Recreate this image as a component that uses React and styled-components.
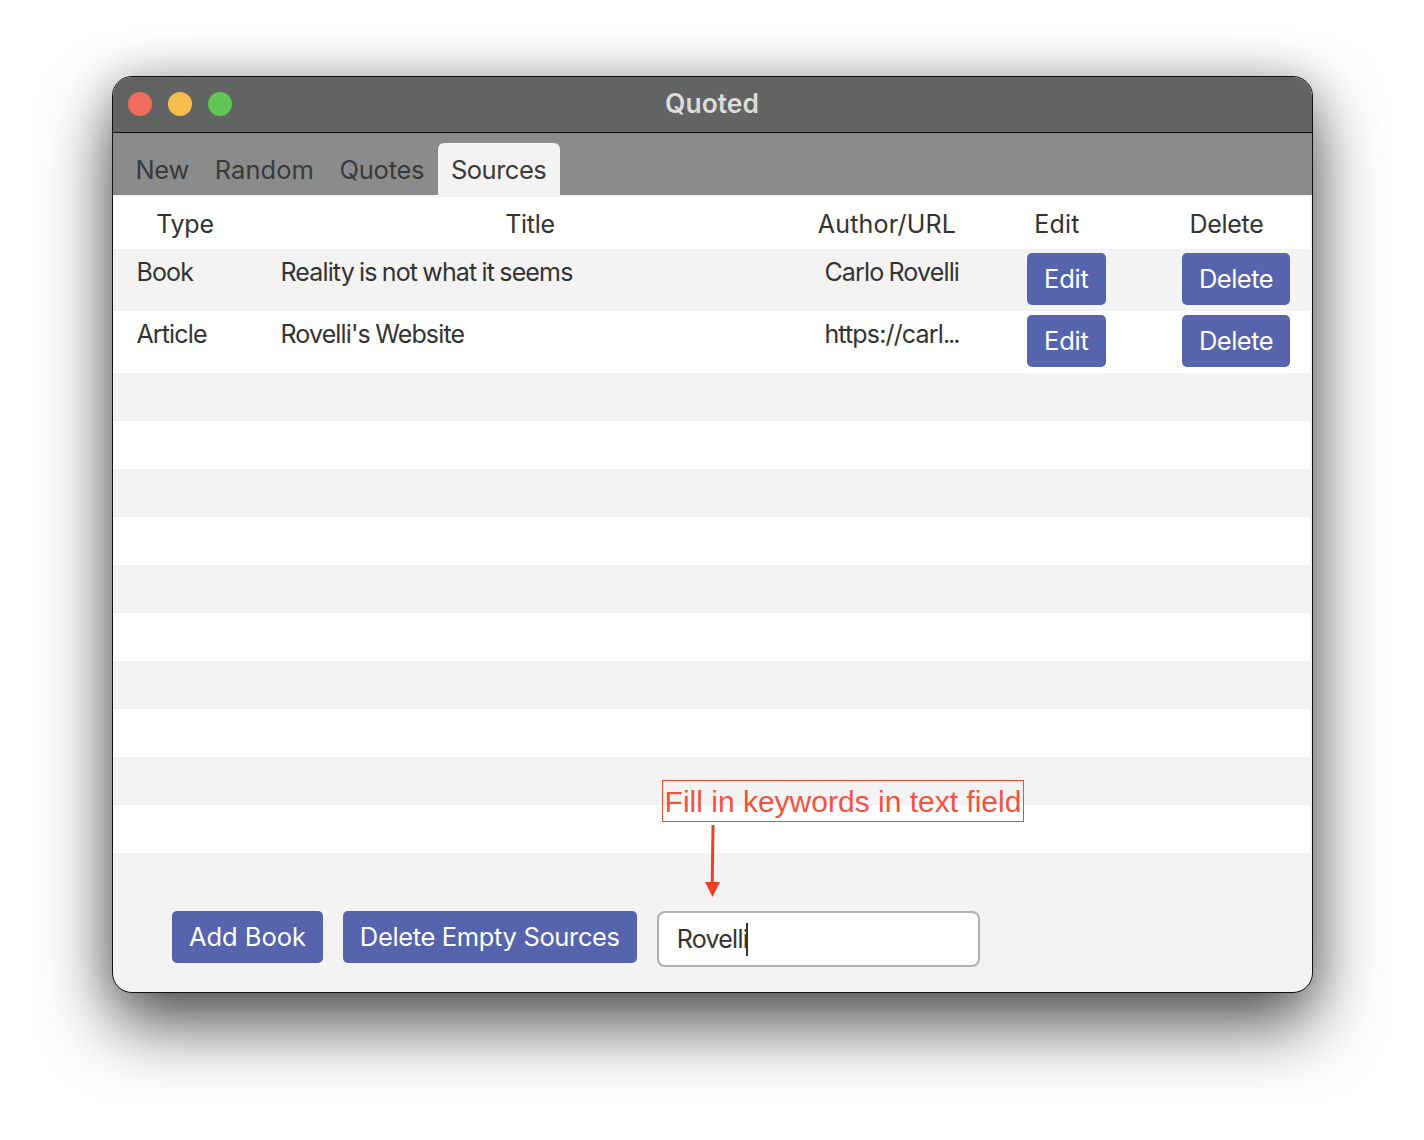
import React from 'react';
import styled, { createGlobalStyle } from 'styled-components';

const GlobalStyle = createGlobalStyle`
  html, body {
    margin: 0;
    background: #fff;
    font-family: Inter, "Liberation Sans", sans-serif;
  }
`;

const Page = styled.div`
  width: 1424px;
  height: 1140px;
  box-sizing: border-box;
  padding: 76px 111px 147px 112px;
  overflow: hidden;
`;

const Window = styled.div`
  position: relative;
  height: 917px;
  box-sizing: border-box;
  display: flex;
  flex-direction: column;
  background: #f3f3f3;
  border: 1px solid #111;
  border-radius: 20px;
  box-shadow: 0 32px 70px rgba(0, 0, 0, 0.66), 0 0 44px rgba(0, 0, 0, 0.2);
`;

const TitleBar = styled.div`
  flex: none;
  height: 56px;
  box-sizing: border-box;
  display: flex;
  align-items: center;
  position: relative;
  padding: 0 0 2px 15px;
  gap: 16px;
  background: #626463;
  border-bottom: 1px solid #111;
  border-radius: 19px 19px 0 0;
`;

const Light = styled.span`
  width: 24px;
  height: 24px;
  border-radius: 50%;
  background: ${({ $color }) => $color};
`;

const WindowTitle = styled.div`
  position: absolute;
  left: 0;
  right: 1px;
  top: 11px;
  text-align: center;
  font-size: 26.4px;
  line-height: 30px;
  font-weight: 600;
  color: #dcdcdc;
`;

const TabBar = styled.div`
  flex: none;
  height: 62px;
  box-sizing: border-box;
  padding: 10px 0 0 9.6px;
  display: flex;
  background: #8b8b8b;
`;

const Tab = styled.div`
  height: 52px;
  box-sizing: border-box;
  padding: 0 12.8px;
  display: flex;
  align-items: center;
  font-size: 25.5px;
  letter-spacing: ${({ $spacing = -0.25 }) => $spacing}px;
  color: #3a3a3a;
`;

const ActiveTab = styled(Tab)`
  width: 122px;
  margin-left: 0.8px;
  padding: 0 13px;
  border-radius: 6px 6px 0 0;
  background: #f3f3f3;
`;

const HeaderRow = styled.div`
  flex: none;
  height: 52px;
  box-sizing: border-box;
  margin: 2px 2px 0 0;
  padding-top: 2px;
  display: grid;
  grid-template-columns: 144px 546px 168px 172px 167px;
  align-items: center;
  background: #fff;
`;

const HeaderCell = styled.div`
  text-align: center;
  font-size: 25px;
  letter-spacing: ${({ $spacing }) => $spacing}px;
  color: #333;
`;

const Row = styled.div`
  flex: none;
  height: ${({ $tall }) => ($tall ? 62 : 48)}px;
  margin-right: 2px;
  display: grid;
  grid-template-columns: 144px 544px 202px 155px 153px;
  background: ${({ $odd }) => ($odd ? '#f3f3f3' : '#fff')};
`;

const Cell = styled.div`
  padding: 8px 0 0 23.4px;
  font-size: 25px;
  line-height: 30px;
  letter-spacing: -0.85px;
  word-spacing: -1px;
  color: #333;
  white-space: nowrap;
`;

const Dots = styled.span`
  letter-spacing: -2px;
`;

const Button = styled.button`
  height: 52px;
  box-sizing: border-box;
  padding: 0 17px 2px;
  border: 0;
  border-radius: 5px;
  background: #5564ac;
  color: #fff;
  font-family: inherit;
  font-size: 25.5px;
  letter-spacing: ${({ $spacing = -0.2 }) => $spacing}px;
  white-space: nowrap;
`;

const RowButton = styled(Button)`
  margin: 4px 0 0 24px;
`;

const Footer = styled.div`
  flex: 1;
  display: flex;
  align-items: flex-start;
  padding: 58px 0 0 59px;
  gap: 20px;
`;

const SearchField = styled.div`
  width: 323px;
  height: 56px;
  box-sizing: border-box;
  padding-left: 18px;
  display: flex;
  align-items: center;
  background: #fff;
  border: 2px solid #b0b0b0;
  border-radius: 8px;
  font-size: 25px;
  letter-spacing: -0.75px;
  color: #333;
`;

const Caret = styled.span`
  width: 2px;
  height: 33px;
  margin-left: -2px;
  background: #333;
`;

const Callout = styled.div`
  position: absolute;
  left: 549px;
  top: 703px;
  width: 362px;
  height: 42px;
  box-sizing: border-box;
  padding-top: 2px;
  border: 1px solid #ee4b33;
  display: flex;
  align-items: center;
  justify-content: center;
  font-family: "Liberation Sans", Arial, sans-serif;
  font-size: 30px;
  color: #f0533f;
  white-space: nowrap;
`;

const ArrowMark = styled.svg`
  position: absolute;
  left: 589px;
  top: 748px;
`;

const rows = [
  { type: 'Book', title: 'Reality is not what it seems', author: 'Carlo Rovelli' },
  { type: 'Article', title: "Rovelli's Website", author: 'https://carl', clipped: true },
];

const headers = [
  { label: 'Type', spacing: -0.3 },
  { label: 'Title', spacing: -0.3 },
  { label: 'Author/URL', spacing: 0.2 },
  { label: 'Edit', spacing: 0.2 },
  { label: 'Delete', spacing: -0.3 },
];

export default function App() {
  return (
    <Page>
      <GlobalStyle />
      <Window>
        <TitleBar>
          <Light $color="#f26d5f" />
          <Light $color="#f6bd4f" />
          <Light $color="#61c554" />
          <WindowTitle>Quoted</WindowTitle>
        </TitleBar>
        <TabBar>
          <Tab>New</Tab>
          <Tab $spacing={0.05}>Random</Tab>
          <Tab>Quotes</Tab>
          <ActiveTab $spacing={-0.5}>Sources</ActiveTab>
        </TabBar>
        <HeaderRow>
          {headers.map((h) => (
            <HeaderCell key={h.label} $spacing={h.spacing}>
              {h.label}
            </HeaderCell>
          ))}
        </HeaderRow>
        {rows.map((r, i) => (
          <Row key={r.type} $tall $odd={i % 2 === 0}>
            <Cell>{r.type}</Cell>
            <Cell>{r.title}</Cell>
            <Cell>
              {r.author}
              {r.clipped && <Dots>...</Dots>}
            </Cell>
            <div>
              <RowButton>Edit</RowButton>
            </div>
            <div>
              <RowButton $spacing={-0.53}>Delete</RowButton>
            </div>
          </Row>
        ))}
        {Array.from({ length: 10 }, (_, i) => (
          <Row key={i} $odd={i % 2 === 0} />
        ))}
        <Footer>
          <Button $spacing={-0.05}>Add Book</Button>
          <Button $spacing={-0.35}>Delete Empty Sources</Button>
          <SearchField>
            Rovelli
            <Caret />
          </SearchField>
        </Footer>
        <Callout>Fill in keywords in text field</Callout>
        <ArrowMark width="20" height="74" viewBox="0 0 20 74">
          <path d="M11 0 L10.2 60" stroke="#ee3f25" strokeWidth="3" fill="none" />
          <path d="M3 57 H18 L10.5 72 Z" fill="#ee3f25" />
        </ArrowMark>
      </Window>
    </Page>
  );
}
